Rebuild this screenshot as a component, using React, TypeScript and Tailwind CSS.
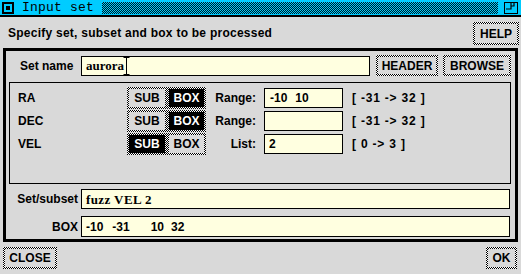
import React from "react";

const checker =
  "bg-[image:repeating-conic-gradient(#000_0%_25%,#fff_0%_50%)] bg-[length:2px_2px]";

function Btn({
  label,
  w,
  h,
  sel = false,
  className = "",
}: {
  label: string;
  w: string;
  h: string;
  sel?: boolean;
  className?: string;
}) {
  return (
    <div className={`${checker} p-[2px] ${w} ${h} ${className} shrink-0`}>
      <div
        className={`w-full h-full flex items-center justify-center font-bold text-[12px] leading-none ${
          sel ? "bg-black text-white" : "bg-[#d9d9d9] text-black"
        }`}
      >
        {label}
      </div>
    </div>
  );
}

function Field({
  w,
  h = "h-[20px]",
  children,
  serif = false,
}: {
  w: string;
  h?: string;
  children?: React.ReactNode;
  serif?: boolean;
}) {
  return (
    <div
      className={`${w} ${h} shrink-0 bg-[#ffffe0] border border-black flex items-center pl-[4px] whitespace-pre leading-none ${
        serif
          ? "font-['Liberation_Serif'] font-bold text-[13px]"
          : "font-bold text-[12px]"
      }`}
    >
      {children}
    </div>
  );
}

function AxisRow({
  name,
  subSel,
  kind,
  value,
  range,
}: {
  name: string;
  subSel: boolean;
  kind: string;
  value: React.ReactNode;
  range: string;
}) {
  return (
    <div className="flex items-center h-[22px]">
      <div className="w-[117px] pl-[8px] font-bold text-[12px]">{name}</div>
      <Btn label="SUB" w="w-[40px]" h="h-[22px]" sel={subSel} />
      <Btn label="BOX" w="w-[39px]" h="h-[22px]" sel={!subSel} />
      <div className="w-[50px] text-right font-bold text-[12px]">{kind}</div>
      <div className="ml-[8px]">
        <Field w="w-[79px]">{value}</Field>
      </div>
      <div className="ml-[9px] font-bold text-[12px] whitespace-pre tracking-[0.8px]">{range}</div>
    </div>
  );
}

export default function App() {
  return (
    <div className="w-[521px] h-[274px] bg-[#d9d9d9] overflow-hidden font-['Liberation_Sans',sans-serif] text-black">
      {/* Title bar */}
      <div className="h-[17px] bg-[#00ccff] border-b-2 border-black flex items-center">
        <svg width="12" height="12" viewBox="0 0 12 12" className="ml-[2px] shrink-0">
          <rect x="1" y="1" width="10" height="10" fill="none" stroke="#000" strokeWidth="2" />
          <rect x="4" y="4" width="4" height="4" fill="#000" />
        </svg>
        <div className="ml-[8px] font-['Liberation_Mono',monospace] text-[13px] leading-none tracking-[0.2px]">
          Input set
        </div>
        <div className="ml-[8px] h-[12px] flex-1 bg-[image:repeating-conic-gradient(#001a22_0%_25%,#00ccff_0%_50%)] bg-[length:2px_2px]" />
        <svg width="14" height="12" viewBox="0 0 14 12" className="ml-[6px] mr-[3px] shrink-0">
          <rect x="0.5" y="0.5" width="13" height="11" fill="none" stroke="#000" strokeWidth="1" />
          <path d="M7 1 V7 H2" fill="none" stroke="#000" strokeWidth="1.2" />
          <path d="M10 1 V4 H7" fill="none" stroke="#000" strokeWidth="1.2" />
        </svg>
      </div>

      {/* Header row */}
      <div className="flex items-center h-[31px] pl-[8px] pr-[2px]">
        <div className="flex-1 font-bold text-[12px] tracking-[0.25px]">
          Specify set, subset and box to be processed
        </div>
        <Btn label="HELP" w="w-[46px]" h="h-[23px]" className="mt-[2px]" />
      </div>

      {/* Outer box */}
      <div className="ml-[3px] w-[515px] h-[194px] border-[3px] border-black flex flex-col">
        {/* Set name row */}
        <div className="mt-[4px] flex items-center h-[21px]">
          <div className="w-[75px] pl-[14px] font-bold text-[12px]">Set name</div>
          <Field w="w-[289px]" serif>
            <span>aurora</span>
            <svg width="7" height="18" viewBox="0 0 7 18" className="ml-[-1px]">
              <path d="M0.5 0.5 H6.5 M3.5 0.5 V17.5 M0.5 17.5 H6.5" stroke="#000" strokeWidth="1" fill="none" />
            </svg>
          </Field>
          <Btn label="HEADER" w="w-[62px]" h="h-[21px]" className="ml-[6px]" />
          <Btn label="BROWSE" w="w-[68px]" h="h-[21px]" className="ml-[5px]" />
        </div>

        {/* Inner box */}
        <div className="mt-[6px] ml-[3px] w-[502px] h-[102px] border border-black pt-[4px] flex flex-col gap-[1px]">
          <AxisRow
            name="RA"
            subSel={false}
            kind="Range:"
            value={
              <>
                <span className="ml-[1px]">-10</span>
                <span className="ml-[8px]">10</span>
              </>
            }
            range="[ -31 -> 32 ]"
          />
          <AxisRow name="DEC" subSel={false} kind="Range:" value="" range="[ -31 -> 32 ]" />
          <AxisRow name="VEL" subSel={true} kind="List:" value="2" range="[ 0 -> 3 ]" />
        </div>

        {/* Set/subset */}
        <div className="mt-[5px] flex items-center h-[20px]">
          <div className="w-[75px] pr-[3px] text-right font-bold text-[12px]">Set/subset</div>
          <Field w="w-[429px]" serif>
            <span className="tracking-[0.4px]">fuzz VEL 2</span>
          </Field>
        </div>
        <div className="mt-[7px] flex items-center h-[21px]">
          <div className="w-[75px] pr-[3px] text-right font-bold text-[12px]">BOX</div>
          <Field w="w-[429px]" h="h-[21px]">
            <span>-10</span>
            <span className="ml-[9px]">-31</span>
            <span className="ml-[21px]">10</span>
            <span className="ml-[7px]">32</span>
          </Field>
        </div>
      </div>

      {/* Bottom buttons */}
      <div className="mt-[5px] flex justify-between pl-[3px] pr-[4px]">
        <Btn label="CLOSE" w="w-[54px]" h="h-[22px]" />
        <Btn label="OK" w="w-[31px]" h="h-[22px]" />
      </div>
    </div>
  );
}
